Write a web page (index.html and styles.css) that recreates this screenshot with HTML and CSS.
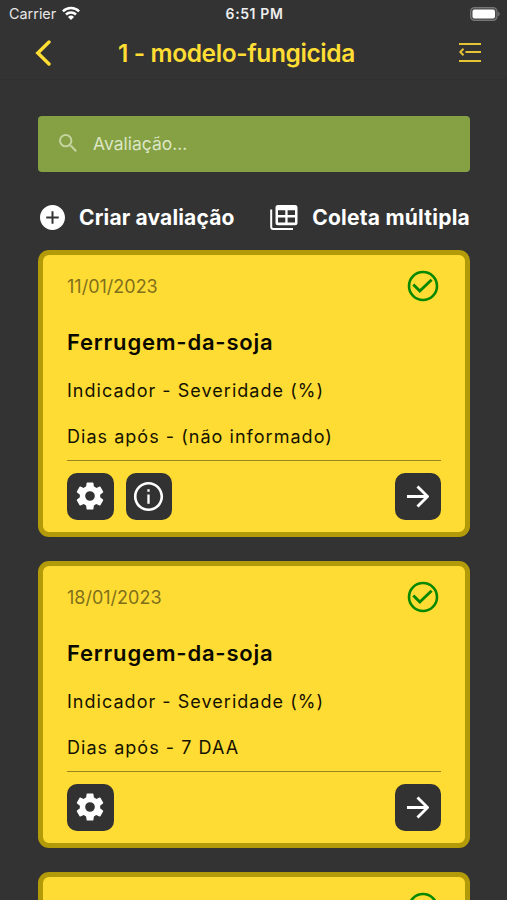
FILE: index.html
```html
<!DOCTYPE html>
<html lang="pt-BR">
<head>
<meta charset="utf-8">
<title>1 - modelo-fungicida</title>
<link rel="stylesheet" href="styles.css">
</head>
<body>
<svg class="symbols" aria-hidden="true">
  <symbol id="gear" viewBox="0 0 24 24"><path d="M19.14 12.94c.04-.3.06-.61.06-.94 0-.32-.02-.64-.07-.94l2.03-1.58a.49.49 0 0 0 .12-.61l-1.92-3.32a.488.488 0 0 0-.59-.22l-2.39.96c-.5-.38-1.03-.7-1.62-.94l-.36-2.54a.484.484 0 0 0-.48-.41h-3.84c-.24 0-.43.17-.47.41l-.36 2.54c-.59.24-1.13.57-1.62.94l-2.39-.96c-.22-.08-.47 0-.59.22L2.74 8.87c-.12.21-.08.47.12.61l2.03 1.58c-.05.3-.09.63-.09.94s.02.64.07.94l-2.03 1.58a.49.49 0 0 0-.12.61l1.92 3.32c.12.22.37.29.59.22l2.39-.96c.5.38 1.03.7 1.62.94l.36 2.54c.05.24.24.41.48.41h3.84c.24 0 .44-.17.47-.41l.36-2.54c.59-.24 1.13-.56 1.62-.94l2.39.96c.22.08.47 0 .59-.22l1.92-3.32c.12-.22.07-.47-.12-.61l-2.01-1.58zM12 15.4A3.4 3.4 0 1 1 12 8.6a3.4 3.4 0 0 1 0 6.8z"/></symbol>
  <symbol id="info" viewBox="0 0 24 24"><path d="M11.200 7h1.600v1.700h-1.600zm0 3.700h1.600V17h-1.600zM12 2C6.480 2 2 6.480 2 12s4.480 10 10 10 10-4.480 10-10S17.520 2 12 2zm0 18.200c-4.500 0-8.200-3.700-8.200-8.200S7.500 3.800 12 3.800s8.200 3.700 8.200 8.200-3.700 8.200-8.200 8.200z"/></symbol>
  <symbol id="arrow" viewBox="0 0 24 24"><path d="M1 12h21M12 1.500 22.500 12 12 22.500" fill="none" stroke="currentColor" stroke-width="3"/></symbol>
  <symbol id="check" viewBox="0 0 32 32"><g fill="none" stroke="currentColor" stroke-width="2.600"><circle cx="16" cy="16" r="14"/><path d="m6.300 14.400 6.500 6.600L24.600 9.800" stroke-width="2.900"/></g></symbol>
</svg>

<header class="header">
  <div class="status">
    <div class="carrier">Carrier
      <svg class="wifi" viewBox="0 0 18 14"><g fill="none" stroke="currentColor" stroke-width="2.500"><path d="M.9 5.300a11.500 11.500 0 0 1 16.200 0"/><path d="M4 8.500a7.100 7.100 0 0 1 10 0"/></g><path d="m9 13.900-3-3a4.300 4.300 0 0 1 6 0z" fill="currentColor"/></svg>
    </div>
    <div class="clock">6:51 PM</div>
    <svg class="battery" viewBox="0 0 30 14"><rect x=".6" y=".6" width="26.400" height="12.800" rx="4" fill="#4b4b4b" stroke="#777" stroke-width="1.200"/><rect x="2.500" y="2.500" width="22.500" height="9" rx="2" fill="#fff"/><path d="M28.100 4.500q3.200 2.500 0 5z" fill="#777"/></svg>
  </div>
  <div class="navbar">
    <svg class="back" viewBox="0 0 16 26"><path d="M14 2 2.800 13 14 24" fill="none" stroke="currentColor" stroke-width="3.400" stroke-linecap="round"/></svg>
    <h1 class="title">1 - modelo-fungicida</h1>
    <svg class="menu" viewBox="0 0 22 20"><g fill="none" stroke="currentColor" stroke-width="2"><path d="M0 1h22M6.500 9H22M0 18h22M4.500 5.800 1.300 9l3.200 3.200"/></g></svg>
  </div>
</header>

<main class="content">
  <div class="search">
    <svg class="search-icon" viewBox="3 3 17.500 17.500"><path d="M15.500 14h-.79l-.28-.27A6.471 6.471 0 0 0 16 9.500 6.500 6.500 0 1 0 9.500 16c1.610 0 3.090-.59 4.230-1.570l.27.28v.79l5 4.990L20.490 19l-4.990-5zm-6 0C7.010 14 5 11.990 5 9.500S7.010 5 9.500 5 14 7.010 14 9.500 11.990 14 9.500 14z"/></svg>
    <span class="placeholder">Avaliação...</span>
  </div>

  <div class="actions">
    <div class="action">
      <svg class="plus" viewBox="2 2 20 20"><path d="M12 2C6.480 2 2 6.480 2 12s4.480 10 10 10 10-4.480 10-10S17.520 2 12 2zm5 10.800h-4.200V17h-1.600v-4.200H7v-1.600h4.200V7h1.600v4.200H17v1.600z"/></svg>
      <span class="create">Criar avaliação</span>
    </div>
    <div class="action">
      <svg class="tables" viewBox="0 0 28 26"><path d="M1.200 4.500v17.500a2 2 0 0 0 2 2H23" fill="none" stroke="currentColor" stroke-width="2"/><path fill-rule="evenodd" d="M8 0h17a2.500 2.500 0 0 1 2.500 2.500v15.200a2.500 2.500 0 0 1-2.500 2.500H8a2.500 2.500 0 0 1-2.500-2.500V2.500A2.500 2.500 0 0 1 8 0zm0 5.200v4.900h7.300V5.200zm9.600 0v4.900H25V5.200zM8 12.500v5h7.300v-5zm9.600 0v5H25v-5z"/></svg>
      <span class="collect">Coleta múltipla</span>
    </div>
  </div>

  <div class="cards">
    <article class="card">
      <div class="card-top"><time class="date">11/01/2023</time><svg class="check"><use href="#check"/></svg></div>
      <h2 class="name">Ferrugem-da-soja</h2>
      <p class="indicator">Indicador - Severidade (%)</p>
      <p class="days">Dias após - (não informado)</p>
      <div class="card-actions">
        <button class="btn"><svg class="gear"><use href="#gear"/></svg></button>
        <button class="btn"><svg class="info"><use href="#info"/></svg></button>
        <button class="btn go"><svg class="arrow"><use href="#arrow"/></svg></button>
      </div>
    </article>
    <article class="card">
      <div class="card-top"><time class="date">18/01/2023</time><svg class="check"><use href="#check"/></svg></div>
      <h2 class="name">Ferrugem-da-soja</h2>
      <p class="indicator">Indicador - Severidade (%)</p>
      <p class="days">Dias após - 7 DAA</p>
      <div class="card-actions">
        <button class="btn"><svg class="gear"><use href="#gear"/></svg></button>
        <button class="btn go"><svg class="arrow"><use href="#arrow"/></svg></button>
      </div>
    </article>
    <article class="card card-next">
      <div class="card-top"><svg class="check"><use href="#check"/></svg></div>
    </article>
  </div>
</main>
</body>
</html>
```

FILE: styles.css
```css
* { box-sizing: border-box; }
body {
  margin: 0;
  height: 900px;
  overflow: hidden;
  background: #333;
  color: #fff;
  font-family: Inter, "Liberation Sans", sans-serif;
}
svg { display: block; flex: none; fill: currentColor; }
.symbols { display: none; }
h1, h2, p { margin: 0; white-space: nowrap; }

.header { height: 80px; border-bottom: 1px solid #2f2f2f; }
.status {
  height: 27px;
  padding: 0 7px 0 9px;
  display: grid;
  grid-template-columns: 1fr auto 1fr;
  align-items: center;
}
.carrier { display: flex; align-items: center; gap: 6px; color: #e6e6e6; font-size: 14.400px; }
.wifi { width: 18px; height: 14px; margin-top: -2px; color: #fff; }
.clock { font-weight: 600; font-size: 14px; letter-spacing: .6px; color: #eee; }
.battery { width: 30px; height: 14px; justify-self: end; }

.navbar {
  height: 52px;
  padding: 0 26px 0 35px;
  display: flex;
  align-items: center;
  color: #ffdd33;
}
.back { width: 16px; height: 26px; }
.title { margin-left: 67px; font-size: 24.500px; font-weight: 600; line-height: 52px; letter-spacing: -.4px; }
.menu { width: 22px; height: 20px; margin-left: auto; color: #e5c536; }

.content { height: 820px; overflow: hidden; padding: 36px 37px 0 38px; }
.search {
  height: 56px;
  display: flex;
  align-items: center;
  padding-left: 21px;
  gap: 16px;
  border-radius: 4px;
  background: #85a143;
  color: #dce6c5;
}
.search-icon { width: 18px; height: 18px; margin-top: -2px; color: #c5d39f; }
.placeholder { margin-top: -1px; font-size: 17.500px; }

.actions {
  height: 78px;
  padding: 13px 0 0 2px;
  display: flex;
  justify-content: space-between;
  align-items: center;
  font-size: 21px;
  font-weight: 700;
  white-space: nowrap;
}
.action { display: flex; align-items: center; gap: 14px; }
.plus { width: 25px; height: 25px; }
.tables { width: 28px; height: 26px; }
.create { letter-spacing: .15px; }
.collect { letter-spacing: .23px; }

.cards { display: grid; gap: 24px; }
.card {
  height: 287px;
  border: 5px solid #b39a08;
  border-radius: 11px;
  padding: 13px 24px 0;
  background: #ffdc33;
  color: #151200;
}
.card-next { height: 28px; overflow: hidden; border-bottom: 0; border-radius: 11px 11px 0 0; }
.card-top { height: 35px; display: flex; align-items: center; }
.date { margin-top: 1px; font-size: 18px; color: #80701c; }
.check { width: 32px; height: 32px; margin-left: auto; margin-right: 2px; color: #078800; }
.name { margin-top: 19px; font-size: 22px; font-weight: 600; line-height: 40px; letter-spacing: .8px; color: #0a0900; }
.indicator, .days { font-size: 18px; line-height: 30px; letter-spacing: 1.030px; }
.indicator { margin-top: 14px; }
.days { margin-top: 16px; }
.card-actions {
  display: flex;
  gap: 12px;
  margin-top: 8px;
  padding-top: 12px;
  border-top: 1px solid #988520;
}
.btn {
  width: 46.500px;
  height: 46.500px;
  padding: 0;
  border: 0;
  border-radius: 10px;
  display: grid;
  place-items: center;
  background: #323232;
  color: #fff;
}
.go { margin-left: auto; }
.gear { width: 34px; height: 34px; }
.info { width: 35px; height: 35px; }
.arrow { width: 23px; height: 23px; }
```
